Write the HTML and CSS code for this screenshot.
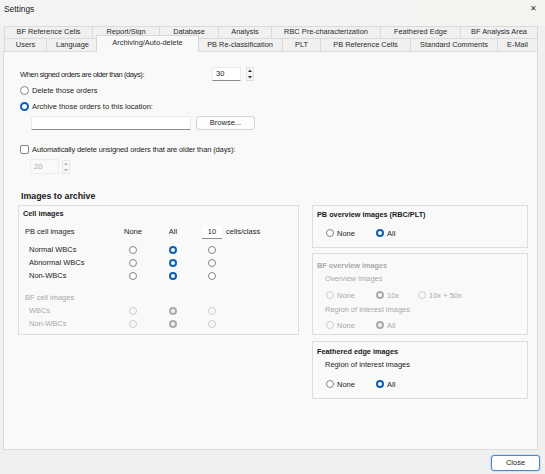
FILE: index.html
```html
<!DOCTYPE html>
<html>
<head>
<meta charset="utf-8">
<title>Settings</title>
<link rel="stylesheet" href="styles.css">
</head>
<body>
<div class="window">
  <div class="titlebar">
    <span class="title">Settings</span>
    <span class="close">✕</span>
  </div>

  <div class="tabs">
    <div class="tabrow row1">
      <div class="tab">BF Reference Cells</div>
      <div class="tab">Report/Sign</div>
      <div class="tab">Database</div>
      <div class="tab">Analysis</div>
      <div class="tab">RBC Pre-characterization</div>
      <div class="tab">Feathered Edge</div>
      <div class="tab">BF Analysis Area</div>
    </div>
    <div class="tabrow row2">
      <div class="tab">Users</div>
      <div class="tab">Language</div>
      <div class="tab selected">Archiving/Auto-delete</div>
      <div class="tab">PB Re-classification</div>
      <div class="tab">PLT</div>
      <div class="tab">PB Reference Cells</div>
      <div class="tab">Standard Comments</div>
      <div class="tab">E-Mail</div>
    </div>
  </div>

  <div class="panel">
    <div class="top">
      <div class="line rowA">
        <span class="lbl-signed">When signed orders are older than (days):</span>
        <div class="spin">
          <div class="spinbox">30</div>
          <svg class="spinbtn" width="8" height="14" viewBox="0 0 8 14">
            <rect x="0.5" y="0.5" width="7" height="13" fill="#f6f6f6" stroke="#e0e0e0"/>
            <path d="M2 5 L4 2.5 L6 5 Z" fill="#333"/>
            <path d="M2 9 L4 11.5 L6 9 Z" fill="#333"/>
          </svg>
        </div>
      </div>
      <div class="line rowB"><span class="radio big"></span><span>Delete those orders</span></div>
      <div class="line rowC"><span class="radio big on"></span><span>Archive those orders to this location:</span></div>
      <div class="line rowD">
        <div class="textbox"></div>
        <div class="button browse">Browse...</div>
      </div>
      <div class="line rowE"><span class="check"></span><span class="lbl-auto">Automatically delete unsigned orders that are older than (days):</span></div>
      <div class="line rowF">
        <div class="spin dis">
          <div class="spinbox">20</div>
          <svg class="spinbtn" width="8" height="14" viewBox="0 0 8 14">
            <rect x="0.5" y="0.5" width="7" height="13" fill="#f9f9f9" stroke="#e6e6e6"/>
            <path d="M2 5 L4 2.5 L6 5 Z" fill="#b0b0b0"/>
            <path d="M2 9 L4 11.5 L6 9 Z" fill="#b0b0b0"/>
          </svg>
        </div>
      </div>
    </div>

    <div class="heading">Images to archive</div>

    <div class="groups">
      <div class="group cellgroup">
        <div class="gtitle">Cell images</div>
        <div class="grid hdr">
          <span class="c1">PB cell images</span>
          <span class="c2 ctr">None</span>
          <span class="c4 ctr">All</span>
          <span class="c6 numbox">10</span>
          <span class="c7 unit">cells/class</span>
        </div>
        <div class="rows first">
          <div class="grid r">
            <span class="c1 ind">Normal WBCs</span>
            <span class="c2 ctr"><span class="radio"></span></span>
            <span class="c4 ctr"><span class="radio on"></span></span>
            <span class="c6 ctr"><span class="radio"></span></span>
          </div>
          <div class="grid r">
            <span class="c1 ind">Abnormal WBCs</span>
            <span class="c2 ctr"><span class="radio"></span></span>
            <span class="c4 ctr"><span class="radio on"></span></span>
            <span class="c6 ctr"><span class="radio"></span></span>
          </div>
          <div class="grid r">
            <span class="c1 ind">Non-WBCs</span>
            <span class="c2 ctr"><span class="radio"></span></span>
            <span class="c4 ctr"><span class="radio on"></span></span>
            <span class="c6 ctr"><span class="radio"></span></span>
          </div>
        </div>
        <div class="rows second dis">
          <div class="grid r">
            <span class="c1">BF cell images</span>
          </div>
          <div class="grid r">
            <span class="c1 ind">WBCs</span>
            <span class="c2 ctr"><span class="radio"></span></span>
            <span class="c4 ctr"><span class="radio on"></span></span>
            <span class="c6 ctr"><span class="radio"></span></span>
          </div>
          <div class="grid r">
            <span class="c1 ind">Non-WBCs</span>
            <span class="c2 ctr"><span class="radio"></span></span>
            <span class="c4 ctr"><span class="radio on"></span></span>
            <span class="c6 ctr"><span class="radio"></span></span>
          </div>
        </div>
      </div>

      <div class="rightcol">
        <div class="group box1">
          <div class="gtitle">PB overview images (RBC/PLT)</div>
          <div class="opts mt6">
            <span class="opt w50"><span class="radio"></span>None</span>
            <span class="opt"><span class="radio on"></span>All</span>
          </div>
        </div>
        <div class="group box2 dis">
          <div class="gtitle">BF overview images</div>
          <div class="sub mt1">Overview images</div>
          <div class="opts mt4">
            <span class="opt w50"><span class="radio"></span>None</span>
            <span class="opt w42"><span class="radio on"></span>10x</span>
            <span class="opt"><span class="radio"></span>10x + 50x</span>
          </div>
          <div class="sub mt3">Region of interest images</div>
          <div class="opts mt3">
            <span class="opt w50"><span class="radio"></span>None</span>
            <span class="opt"><span class="radio on"></span>All</span>
          </div>
        </div>
        <div class="group box3">
          <div class="gtitle">Feathered edge images</div>
          <div class="sub mt1">Region of interest images</div>
          <div class="opts mt7">
            <span class="opt w50"><span class="radio"></span>None</span>
            <span class="opt"><span class="radio on"></span>All</span>
          </div>
        </div>
      </div>
    </div>
  </div>

  <div class="footer">
    <div class="button close-btn">Close</div>
  </div>
</div>
</body>
</html>
```
FILE: styles.css
```css
* { box-sizing: border-box; }

html, body {
  margin: 0;
  padding: 0;
}

body {
  width: 545px;
  height: 474px;
  overflow: hidden;
  background: #f0f0f0;
  font-family: "Liberation Sans", Arial, sans-serif;
  font-size: 7.5px;
  color: #1e1e1e;
}

.window {
  width: 545px;
  height: 474px;
  background: #f0f0f0;
}

/* title bar */
.titlebar {
  height: 26px;
  display: flex;
  justify-content: space-between;
  align-items: flex-start;
  padding: 4px 8px 0 4px;
  background: linear-gradient(90deg, #f3f3f3 0%, #f4f4f4 60%, #f6f4ef 100%);
}
.title {
  font-size: 8.4px;
  color: #222;
  line-height: 10px;
}
.close {
  font-size: 8px;
  line-height: 10px;
  color: #333;
}

/* tabs */
.tabs {
  margin-left: 4px;
  width: 534px;
  background: #f3f3f3;
}
.tabrow {
  display: flex;
  align-items: flex-end;
}
.row1 { height: 12px; }
.row2 { height: 13px; }

.tab {
  font-size: 7.4px;
  text-align: center;
  color: #2a2a2a;
  background: #f0f0f0;
  border-left: 1px solid #dadada;
  border-top: 1px solid #dadada;
  white-space: nowrap;
  flex: none;
}
.row1 .tab { height: 12px; line-height: 10px; }
.row2 .tab { height: 13px; line-height: 12px; }
.tab:last-child { border-right: 1px solid #dadada; }

.row1 .tab:nth-child(1) { width: 88px; }
.row1 .tab:nth-child(2) { width: 67px; }
.row1 .tab:nth-child(3) { width: 59px; }
.row1 .tab:nth-child(4) { width: 53px; }
.row1 .tab:nth-child(5) { width: 109px; }
.row1 .tab:nth-child(6) { width: 80px; }
.row1 .tab:nth-child(7) { width: 78px; }

.row2 .tab:nth-child(1) { width: 42px; }
.row2 .tab:nth-child(2) { width: 52px; }
.row2 .tab:nth-child(3) { width: 99px; }
.row2 .tab:nth-child(4) { width: 85px; }
.row2 .tab:nth-child(5) { width: 38px; }
.row2 .tab:nth-child(6) { width: 90px; }
.row2 .tab:nth-child(7) { width: 87px; }
.row2 .tab:nth-child(8) { width: 41px; }

.row2 .tab.selected {
  width: 103px;
  height: 17px;
  margin: 0 -2px -1px -2px;
  line-height: 13px;
  background: #f9f9f9;
  border: 1px solid #d6d6d6;
  border-bottom: none;
  position: relative;
  z-index: 1;
}
.row2 .tab.selected + .tab { border-left-color: #d6d6d6; }

/* panel */
.panel {
  margin-left: 3px;
  width: 535px;
  height: 399px;
  background: #f9f9f9;
  border: 1px solid #dcdcdc;
  box-shadow: inset 0 -3px 0 #fafafa;
}

.top { padding-left: 16px; }
.line {
  display: flex;
  align-items: center;
}
.rowA { height: 16px; margin-top: 14px; }
.rowB { height: 12px; margin-top: 2px; }
.rowC { height: 12px; margin-top: 4px; }
.rowD { height: 14px; margin-top: 4px; padding-left: 11px; }
.rowE { height: 12px; margin-top: 13px; }
.rowF { height: 15px; margin-top: 4px; padding-left: 10px; }

.lbl-signed {
  width: 192px;
  font-size: 7.5px;
  letter-spacing: -0.4px;
}
.lbl-auto { letter-spacing: -0.12px; }

.spin {
  display: flex;
  align-items: center;
}
.spinbox {
  width: 29px;
  height: 14px;
  background: #fff;
  border: 1px solid #ececec;
  border-bottom: 1px solid #8c8c8c;
  padding-left: 3px;
  line-height: 12px;
}
.spinbtn { margin-left: 5px; display: block; }
.spin.dis .spinbox {
  background: #f9f9f9;
  border: 1px solid #ececec;
  color: #a8a8a8;
  height: 15px;
  line-height: 13px;
}
.spin.dis .spinbtn { margin-left: 3px; }

.radio {
  display: inline-block;
  flex: none;
  width: 8px;
  height: 8px;
  border-radius: 50%;
  border: 1px solid #858585;
  background: #fff;
}
.radio.big {
  width: 9px;
  height: 9px;
  margin-right: 3px;
}
.radio.on {
  border: 2.5px solid #0d5fb3;
  background: #fff;
}
.radio.big.on {
  border-width: 2.8px;
}

.check {
  display: inline-block;
  width: 9px;
  height: 9px;
  border: 1px solid #858585;
  border-radius: 2px;
  background: #fff;
  margin-right: 3px;
}

.textbox {
  width: 160px;
  height: 14px;
  background: #fff;
  border: 1px solid #ececec;
  border-bottom: 1px solid #8c8c8c;
}
.button {
  background: #fdfdfd;
  border: 1px solid #d2d2d2;
  border-radius: 3px;
  text-align: center;
  color: #1e1e1e;
}
.browse {
  margin-left: 5px;
  width: 59px;
  height: 14px;
  line-height: 12px;
}

.heading {
  padding-left: 17px;
  margin-top: 16px;
  height: 12px;
  line-height: 12px;
  font-size: 8.8px;
  font-weight: bold;
  color: #1a1a1a;
}

/* groups */
.groups {
  display: flex;
  align-items: flex-start;
  padding-left: 14px;
  margin-top: 3px;
  gap: 13px;
}
.group {
  border: 1px solid #dedede;
  background: #f9f9f9;
}
.gtitle {
  font-weight: bold;
  font-size: 7.3px;
  height: 12px;
  line-height: 12px;
  color: #1a1a1a;
}

.cellgroup {
  width: 281px;
  height: 130px;
  padding: 2px 0 0 4px;
}
.grid {
  display: grid;
  grid-template-columns: 98px 20px 20px 20px 19px 20px auto;
  align-items: center;
  margin-left: 2px;
}
.hdr { height: 15px; margin-top: 4px; }
.rows.first { margin-top: 4px; }
.rows.second { margin-top: 9px; }
.grid.r { height: 13px; }
.c1 { grid-column: 1; white-space: nowrap; }
.c2 { grid-column: 2; }
.c4 { grid-column: 4; }
.c6 { grid-column: 6; }
.c7 { grid-column: 7; }
.ctr { display: flex; justify-content: center; align-items: center; }
.ind { padding-left: 4px; }
.numbox {
  height: 14px;
  background: #fff;
  border-bottom: 1px solid #8c8c8c;
  text-align: center;
  line-height: 13px;
}
.unit { padding-left: 4px; }

.dis { color: #a9a9a9; }
.dis .gtitle { color: #a9a9a9; }
.dis .radio { border-color: #cdcdcd; background: #f9f9f9; }
.dis .radio.on {
  border: 2.5px solid #acacac;
  background: #f4f4f4;
}

.rightcol {
  width: 216px;
  display: flex;
  flex-direction: column;
}
.box1 { height: 43px; padding: 3px 0 0 4px; }
.box2 { height: 82px; padding: 6px 0 0 4px; margin-top: 5px; }
.box3 { height: 58px; padding: 4px 0 0 4px; margin-top: 6px; }

.sub {
  height: 12px;
  line-height: 12px;
  margin-left: 8px;
}
.opts {
  display: flex;
  align-items: center;
  height: 12px;
  margin-left: 9px;
}
.opt {
  display: flex;
  align-items: center;
  gap: 3px;
}
.w50 { width: 50px; }
.w42 { width: 42px; }
.mt1 { margin-top: 1px; }
.mt3 { margin-top: 3px; }
.mt4 { margin-top: 4px; }
.mt6 { margin-top: 6px; }
.mt7 { margin-top: 7px; }

/* footer */
.footer {
  display: flex;
  justify-content: flex-end;
  padding: 5px 5px 0 0;
}
.close-btn {
  width: 49px;
  height: 16px;
  line-height: 14px;
  border: 1px solid #4f86c6;
  box-shadow: 0 0 0 1px #cfe0f2;
}
```
